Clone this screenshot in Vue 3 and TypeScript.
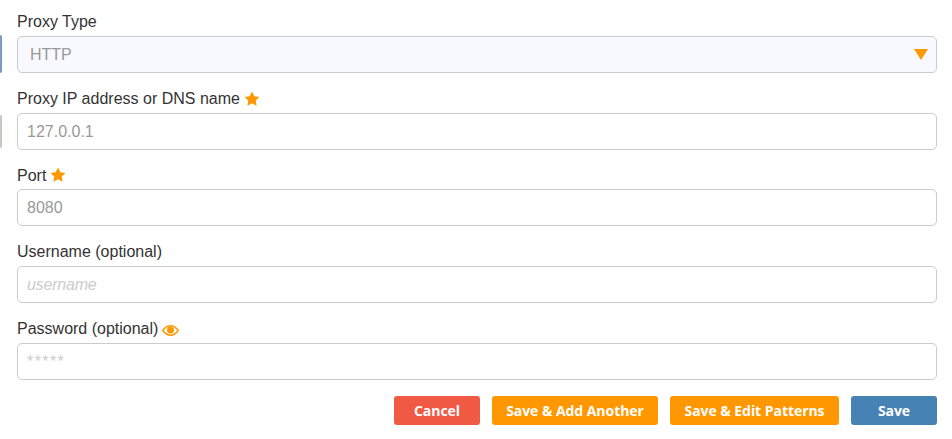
<script setup lang="ts">
const eyePath = 'M.8 5.500C3.300 2 6 .8 8.500 .8s5.200 1.200 7.700 4.700C13.700 9 11 10.200 8.500 10.200S3.300 9 .8 5.500Z'
const starPath = 'M12 .8l3.500 7.100 7.700 1.100-5.600 5.400 1.300 7.700L12 18.500l-6.900 3.600 1.300-7.700L.8 9l7.700-1.100z'
</script>

<template>
  <div class="page">
    <span class="edge edge-a"></span>
    <span class="edge edge-b"></span>
    <form class="form" @submit.prevent>
      <section class="field">
        <label class="label">Proxy Type</label>
        <div class="control select">
          <span class="select-value">HTTP</span>
          <svg class="arrow" viewBox="0 0 14 11" width="14" height="11"><path d="M0 0h14L7 11z" fill="#ff9800" /></svg>
        </div>
      </section>
      <section class="field">
        <label class="label">Proxy IP address or DNS name
          <svg class="star" viewBox="0 0 24 24" width="16" height="16"><path :d="starPath" fill="#ff9800" /></svg>
        </label>
        <input class="control" type="text" placeholder="127.0.0.1" />
      </section>
      <section class="field">
        <label class="label">Port
          <svg class="star" viewBox="0 0 24 24" width="16" height="16"><path :d="starPath" fill="#ff9800" /></svg>
        </label>
        <input class="control raised" type="text" placeholder="8080" />
      </section>
      <section class="field">
        <label class="label label-up">Username (optional)</label>
        <input class="control light raised" type="text" placeholder="username" />
      </section>
      <section class="field">
        <label class="label">Password (optional)
          <svg class="eye" viewBox="0 0 17 11" width="17" height="11">
            <path :d="eyePath" fill="none" stroke="#ff9800" stroke-width="1.500" />
            <circle cx="8.500" cy="5" r="3.500" fill="#ff9800" />
          </svg>
        </label>
        <input class="control light stars" type="text" placeholder="*****" />
      </section>
      <div class="actions">
        <button type="button" class="btn cancel">Cancel</button>
        <button type="button" class="btn amber add">Save &amp; Add Another</button>
        <button type="button" class="btn amber edit">Save &amp; Edit Patterns</button>
        <button type="button" class="btn save">Save</button>
      </div>
    </form>
  </div>
</template>

<style scoped>
.page {
  position: relative;
  width: 952px;
  height: 439px;
  background: #fff;
  overflow: hidden;
  font-family: "Liberation Sans", Arial, sans-serif;
  color: #333;
}
.edge {
  position: absolute;
  left: 0;
  box-sizing: border-box;
  width: 2px;
  border-radius: 0 2px 2px 0;
}
.edge-a {
  top: 35px;
  height: 38px;
  background: #8c99a8;
  border-right: 1px solid #6a9bd0;
}
.edge-b {
  top: 115px;
  height: 33px;
  background: #c8cac8;
  border-right: 1px solid #bcc8bc;
}
.form {
  display: flex;
  flex-direction: column;
  padding: 11.800px 15px 0 17px;
}
.field {
  display: flex;
  flex-direction: column;
  height: 76.800px;
}
.label {
  display: flex;
  align-items: center;
  gap: 4px;
  height: 24px;
  padding-bottom: 3px;
  box-sizing: border-box;
  font-size: 16px;
  line-height: 20px;
  color: #333;
}
.label-up {
  padding-bottom: 5px;
}
.star {
  flex: none;
  margin-top: -1px;
}
.eye {
  flex: none;
  margin-top: 3px;
}
.control {
  box-sizing: border-box;
  width: 920px;
  height: 37px;
  padding: 2px 9px 0;
  border: 1px solid #ccc;
  border-radius: 5px;
  background: #fff;
  font: 16px "Liberation Sans", Arial, sans-serif;
  color: #999;
  outline: none;
}
.raised {
  padding-top: 0;
}
.control::placeholder {
  color: #999;
  opacity: 1;
}
.light::placeholder {
  color: #ccc;
  font-style: italic;
  letter-spacing: -0.2px;
}
.stars::placeholder {
  font-style: normal;
  letter-spacing: 1.400px;
}
.select {
  display: flex;
  align-items: center;
  justify-content: space-between;
  padding: 0 8px 0 12px;
  background: #f8f9ff;
}
.select-value {
  color: #999;
  padding-top: 2px;
}
.actions {
  display: flex;
  justify-content: flex-end;
  gap: 12px;
}
.btn {
  height: 29px;
  padding: 0;
  border: 0;
  border-radius: 3px;
  color: #fff;
  font: 700 14px "Open Sans", sans-serif;
  letter-spacing: -0.05px;
}
.cancel {
  width: 86px;
  background: #f05a45;
}
.amber {
  background: #ff9800;
}
.add {
  width: 166px;
}
.edit {
  width: 169px;
}
.save {
  width: 86px;
  background: #4682b4;
}
</style>
